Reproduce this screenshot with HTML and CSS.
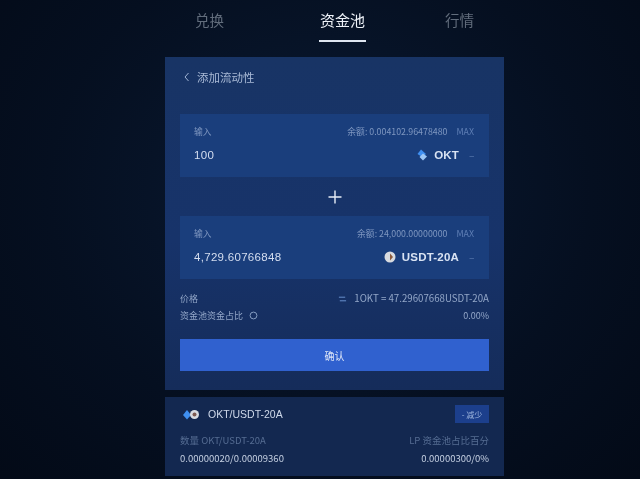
FILE: index.html
```html
<!DOCTYPE html>
<html lang="zh">
<head>
<meta charset="utf-8">
<title>资金池</title>
<link rel="stylesheet" href="styles.css">
</head>
<body>
<div class="page">
  <nav class="tabs">
    <a class="tab tab-swap">兑换</a>
    <a class="tab tab-pool active">资金池</a>
    <a class="tab tab-market">行情</a>
  </nav>
  <main class="card main-card">
    <header class="back-row">
      <svg class="chevron" viewBox="0 0 8 10" width="8" height="10"><path d="M5.5 1 2 5l3.5 4" fill="none" stroke="#9fb3d4" stroke-width="1"/></svg>
      <span>添加流动性</span>
    </header>
    <section class="field">
      <div class="field-top"><span>输入</span><span class="balance">余额: 0.004102.96478480<em>MAX</em></span></div>
      <div class="field-main">
        <span class="amount">100</span>
        <span class="token">
          <svg class="token-icon" viewBox="0 0 12 12" width="12" height="12"><path d="M5 .5 10 5 6 8 1.5 5z" fill="#3f8ff0"/><path d="M7 4.5 11 7.5 7 11.5 3.5 8z" fill="#9cc7f5"/></svg>
          <b>OKT</b><i>–</i>
        </span>
      </div>
    </section>
    <div class="plus"><svg viewBox="0 0 14 14" width="14" height="14"><path d="M7 .5v13M.5 7h13" stroke="#e8eef8" stroke-width="1.4"/></svg></div>
    <section class="field">
      <div class="field-top"><span>输入</span><span class="balance">余额: 24,000.00000000<em>MAX</em></span></div>
      <div class="field-main">
        <span class="amount">4,729.60766848</span>
        <span class="token">
          <svg class="token-icon" viewBox="0 0 12 12" width="12" height="12"><circle cx="6" cy="6" r="5.5" fill="#d8dbe0"/><path d="M6 2.5 9 6 6 9.5z" fill="#8a5a3c"/></svg>
          <b>USDT-20A</b><i>–</i>
        </span>
      </div>
    </section>
    <div class="info-row first"><span>价格</span><span class="rate"><svg viewBox="0 0 10 8" width="9" height="8"><path d="M1 2h7M9 6H2" stroke="#6f9ad8" stroke-width="1" fill="none"/></svg>1OKT = 47.29607668USDT-20A</span></div>
    <div class="info-row"><span class="share">资金池资金占比<svg viewBox="0 0 10 10" width="9" height="9"><circle cx="5" cy="5" r="3.8" fill="none" stroke="#8fa6c9" stroke-width="1"/></svg></span><span>0.00%</span></div>
    <button class="confirm">确认</button>
  </main>
  <section class="card pool-card">
    <div class="pool-head">
      <span class="pair">
        <span class="pair-icons">
          <svg viewBox="0 0 18 11" width="18" height="11"><path d="M5 1 9 6 5 10.5 1 6z" fill="#3f8ff0"/><circle cx="12.5" cy="5.5" r="4.5" fill="#d8dbe0"/><circle cx="12.5" cy="5.5" r="2" fill="#7d5a50"/></svg>
        </span>
        OKT/USDT-20A
      </span>
      <button class="reduce">- 减少</button>
    </div>
    <div class="pool-row muted"><span>数量 OKT/USDT-20A</span><span>LP 资金池占比百分</span></div>
    <div class="pool-row"><span>0.00000020/0.00009360</span><span>0.00000300/0%</span></div>
  </section>
</div>
</body>
</html>
```
FILE: styles.css
```css
* { box-sizing: border-box; }
html, body { margin: 0; height: 100%; }
body {
  background: #040c1b;
  font-family: "Noto Sans CJK SC", "Liberation Sans", sans-serif;
  color: #dfe7f3;
  overflow: hidden;
}
.page {
  width: 640px;
  height: 479px;
  padding-left: 165px;
  overflow: hidden;
  background: radial-gradient(ellipse at 50% 40%, #0a1a33 0%, #050f20 60%, #030a17 100%);
  filter: blur(0.55px);
}
.tabs {
  width: 339px;
  height: 57px;
  display: flex;
  font-size: 14.5px;
  line-height: 20px;
}
.tab { color: #626d7c; padding-top: 10px; }
.tab-swap { margin-left: 30px; }
.tab-pool {
  margin-left: 95px;
  width: 47px;
  height: 42px;
  font-size: 15px;
  color: #eef2f8;
  border-bottom: 2px solid #dfe6f0;
  text-align: center;
  white-space: nowrap;
}
.tab-market { margin-left: 79px; }
.card { width: 339px; }
.main-card {
  height: 333px;
  padding: 0 15px;
  background: linear-gradient(180deg, #183465 0%, #17336a 55%, #152c5a 100%);
}
.back-row {
  height: 57px;
  display: flex;
  align-items: center;
  gap: 6px;
  padding-bottom: 18px;
  padding-left: 3px;
  font-size: 11.5px;
  color: #a9bad6;
}
.field {
  height: 63px;
  padding: 10px 15px 0 14px;
  background: #1a3e7c;
}
.field-top {
  display: flex;
  justify-content: space-between;
  font-size: 8.8px;
  line-height: 16px;
  color: #7f97c0;
}
.balance em { font-style: normal; margin-left: 9px; color: #5f7fb5; }
.field-main {
  display: flex;
  justify-content: space-between;
  align-items: center;
  height: 24px;
  font-size: 11.5px;
  margin-top: 3px;
}
.amount { color: #d5def0; font-family: "Liberation Sans", sans-serif; letter-spacing: .3px; }
.token { display: flex; align-items: center; gap: 6px; font-family: "Liberation Sans", sans-serif; }
.token b { font-weight: 700; color: #d9e3f3; font-size: 11.5px; letter-spacing: .2px; }
.token i { font-style: normal; color: #6f8dbe; font-size: 8px; width: 8px; margin-left: 1px; text-align: right; }
.plus { height: 39px; display: flex; align-items: center; justify-content: center; }
.info-row {
  display: flex;
  justify-content: space-between;
  align-items: baseline;
  height: 18px;
  font-size: 9px;
  line-height: 18px;
  color: #93a7c8;
}
.info-row.first { margin-top: 10px; }
.rate { font-size: 9.7px; }
.rate svg { margin-right: 7px; vertical-align: -1px; }
.share svg { margin-left: 6px; vertical-align: -1px; }
.confirm {
  display: block;
  width: 100%;
  height: 32px;
  margin-top: 14px;
  border: 0;
  background: #3061cf;
  color: #dfe7f8;
  font: 10px "Noto Sans CJK SC", sans-serif;
}
.pool-card {
  height: 79px;
  margin-top: 7px;
  padding: 8px 15px 0;
  background: #132850;
}
.pool-head { display: flex; justify-content: space-between; align-items: center; height: 18px; }
.pair { display: flex; align-items: center; gap: 8px; font: 10.5px "Liberation Sans", sans-serif; color: #cfd9ea; }
.pair-icons { display: flex; margin-left: 2px; }
.reduce {
  width: 34px;
  height: 18px;
  border: 0;
  padding: 0;
  background: #1c3f8c;
  color: #9fb6dd;
  font: 8px "Noto Sans CJK SC", sans-serif;
}
.pool-row {
  display: flex;
  justify-content: space-between;
  font-size: 9.5px;
  line-height: 18px;
  color: #c5d0e2;
}
.pool-row.muted { margin-top: 8px; color: #556c92; }
```
